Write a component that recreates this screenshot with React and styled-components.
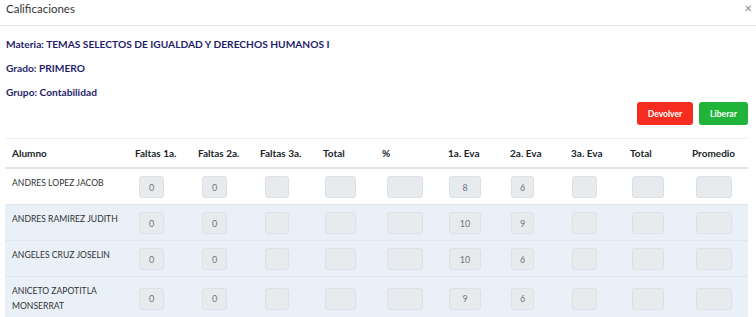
import React from 'react';
import styled, { createGlobalStyle } from 'styled-components';

const GlobalStyle = createGlobalStyle`
  html, body {
    margin: 0;
    padding: 0;
    background: #fff;
    font-family: Lato, "Open Sans", sans-serif;
    color: #212529;
  }
`;

const Modal = styled.div`
  width: 756px;
  height: 317px;
  overflow: hidden;
  background: #fff;
`;

const Header = styled.div`
  display: flex;
  align-items: center;
  justify-content: space-between;
  height: 26px;
  padding: 0 4px 0 6px;
  border-bottom: 1px solid #e6e6e6;
  box-sizing: border-box;
`;

const Title = styled.h5`
  margin: 0;
  margin-top: -8px;
  font-size: 11.5px;
  font-weight: 400;
  color: #333;
`;

const Close = styled.span`
  margin-top: -8px;
  font-size: 13px;
  color: #888;
  line-height: 1;
`;

const Body = styled.div`
  padding: 6px 8px 0 5px;
`;

const Info = styled.p`
  margin: 0 0 0 1px;
  height: 24px;
  line-height: 24px;
  font-size: 10.2px;
  font-weight: 700;
  color: #1f1e6b;
`;

const Actions = styled.div`
  display: flex;
  justify-content: flex-end;
  gap: 6px;
  margin-top: -2px;
`;

const Button = styled.button`
  height: 23px;
  padding: 0;
  width: ${p => p.$w}px;
  border: none;
  border-radius: 3px;
  background: ${p => p.$bg};
  color: #fff;
  font-family: inherit;
  font-size: 8.6px;
  font-weight: 700;
`;

const Table = styled.table`
  margin-top: 13px;
  width: 743px;
  border-collapse: collapse;
  table-layout: fixed;
`;

const Th = styled.th`
  height: 28px;
  padding: 0 0 0 7px;
  text-align: left;
  font-size: 10px;
  font-weight: 700;
  border-top: 1px solid #efefef;
  border-bottom: 2px solid #e2e5e8;
`;

const Row = styled.tr`
  background: ${p => (p.$alt ? '#e9f0f8' : '#fff')};
  border-top: 1px solid #dfe6ee;
`;

const NameCell = styled.td`
  vertical-align: top;
  padding: 7px 8px 5px 7px;
  font-size: 8.6px;
  line-height: 15px;
  color: #333;
`;

const BoxCell = styled.td`
  vertical-align: middle;
  padding: 7px 0 6px ${p => 7 + p.$off}px;
`;

const Box = styled.div`
  width: ${p => p.$w}px;
  height: 22px;
  box-sizing: border-box;
  background: #e8ebee;
  border: 1px solid #dde1e5;
  border-radius: 3px;
  display: flex;
  align-items: center;
  justify-content: center;
  font-size: 9px;
  color: #6c757d;
`;

const columns = [
  { label: 'Faltas 1a.', width: 63, box: 25, off: 4 },
  { label: 'Faltas 2a.', width: 62, box: 25, off: 4 },
  { label: 'Faltas 3a.', width: 63, box: 24, off: 5 },
  { label: 'Total', width: 59, box: 31, off: 2 },
  { label: '%', width: 66, box: 36, off: 5 },
  { label: '1a. Eva', width: 62, box: 32, off: 1 },
  { label: '2a. Eva', width: 61, box: 23, off: 1 },
  { label: '3a. Eva', width: 59, box: 25, off: 1 },
  { label: 'Total', width: 62, box: 32, off: 2 },
  { label: 'Promedio', width: 63, box: 36, off: 4 },
];

const students = [
  { name: 'ANDRES LOPEZ JACOB', values: ['0', '0', '', '', '', '8', '6', '', '', ''] },
  { name: 'ANDRES RAMIREZ JUDITH', values: ['0', '0', '', '', '', '10', '9', '', '', ''] },
  { name: 'ANGELES CRUZ JOSELIN', values: ['0', '0', '', '', '', '10', '6', '', '', ''] },
  { name: 'ANICETO ZAPOTITLA MONSERRAT', values: ['0', '0', '', '', '', '9', '6', '', '', ''] },
];

export default function App() {
  return (
    <Modal>
      <GlobalStyle />
      <Header>
        <Title>Calificaciones</Title>
        <Close>×</Close>
      </Header>
      <Body>
        <Info>Materia: TEMAS SELECTOS DE IGUALDAD Y DERECHOS HUMANOS I</Info>
        <Info>Grado: PRIMERO</Info>
        <Info>Grupo: Contabilidad</Info>
        <Actions>
          <Button $w={56} $bg="#f42d20">Devolver</Button>
          <Button $w={49} $bg="#20b43a">Liberar</Button>
        </Actions>
        <Table>
          <colgroup>
            <col style={{ width: 123 }} />
            {columns.map((c, i) => (
              <col key={i} style={{ width: c.width }} />
            ))}
          </colgroup>
          <thead>
            <tr>
              <Th>Alumno</Th>
              {columns.map((c, i) => (
                <Th key={i}>{c.label}</Th>
              ))}
            </tr>
          </thead>
          <tbody>
            {students.map((s, r) => (
              <Row key={r} $alt={r > 0}>
                <NameCell>{s.name}</NameCell>
                {columns.map((c, i) => (
                  <BoxCell key={i} $off={c.off}>
                    <Box $w={c.box}>{s.values[i]}</Box>
                  </BoxCell>
                ))}
              </Row>
            ))}
          </tbody>
        </Table>
      </Body>
    </Modal>
  );
}
